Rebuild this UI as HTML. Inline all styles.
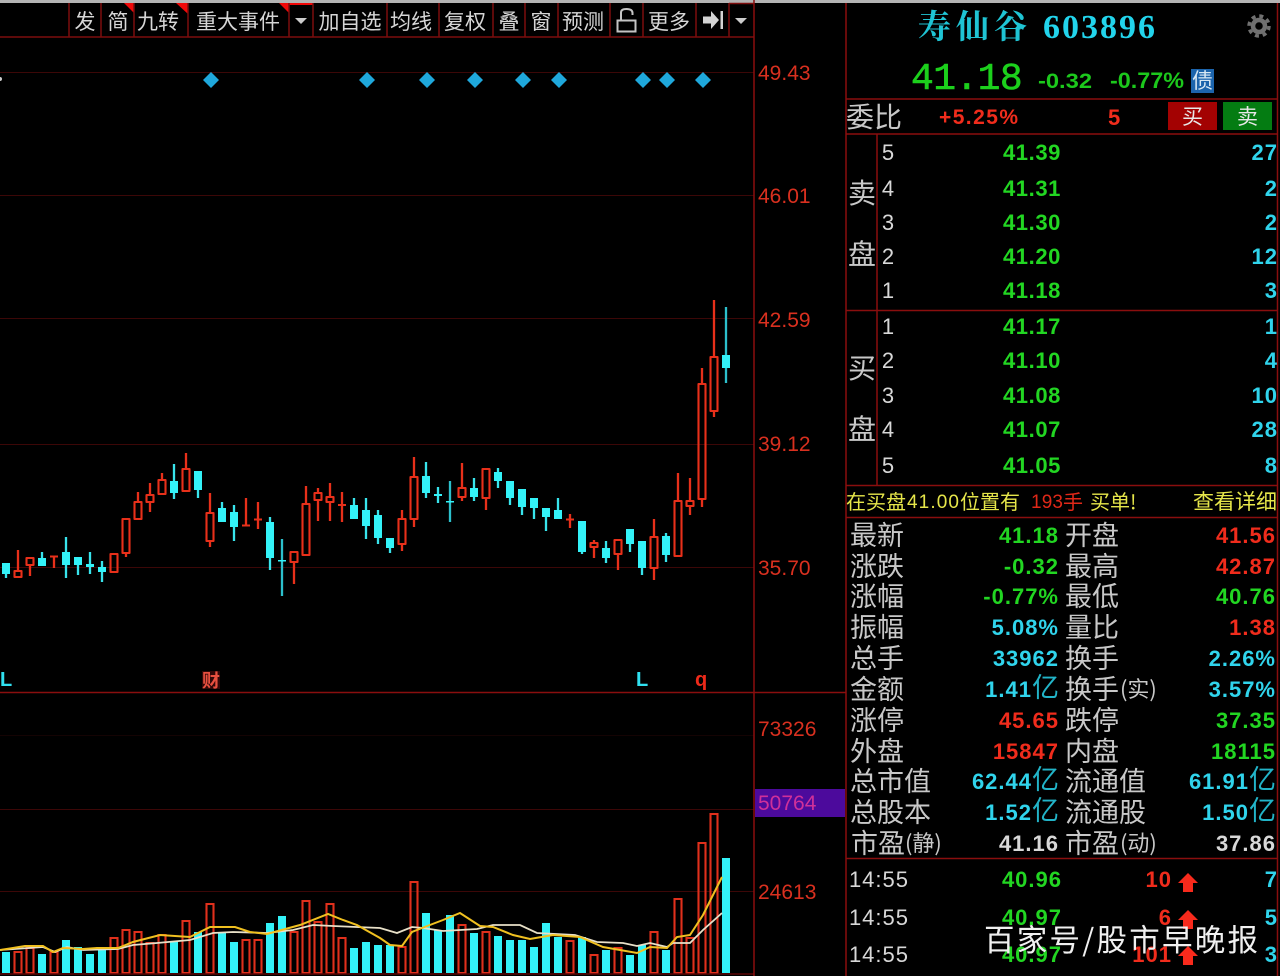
<!DOCTYPE html>
<html lang="zh"><head><meta charset="utf-8"><title>寿仙谷 603896</title>
<style>
html,body{margin:0;padding:0;background:#000;width:1280px;height:976px;overflow:hidden}
svg{display:block;position:absolute;left:0;top:0;filter:blur(.35px)}
text{font-family:"Liberation Sans","WenQuanYi Zen Hei",sans-serif}
.tb{font-family:"WenQuanYi Zen Hei","Noto Sans CJK SC",sans-serif;font-size:21px;fill:#d6d6d6;text-anchor:middle}
.ax{font-size:21px;fill:#d9301f;stroke:none}
.lb{font-family:"WenQuanYi Zen Hei","Noto Sans CJK SC",sans-serif;font-size:27px;fill:#c8c8c8}
.n{font-weight:bold;font-size:22px;letter-spacing:1px;text-anchor:end}
.g{fill:#22d622}.r{fill:#f02c1c}.c{fill:#30d4ec}.w{fill:#d8d8d8}
.yi{font-family:"WenQuanYi Zen Hei","Noto Sans CJK SC",sans-serif;font-weight:normal;font-size:27px;letter-spacing:0;fill:#22b4c8}
.p{font-weight:bold;font-size:22px;letter-spacing:.6px;text-anchor:middle;fill:#22d622}
.i{font-size:22px;fill:#d8d8d8;text-anchor:middle}
.y{font-family:"WenQuanYi Zen Hei","Noto Sans CJK SC",sans-serif;font-size:20px;fill:#e6e64a}
</style></head><body>
<svg width="1280" height="976" viewBox="0 0 1280 976">
<rect width="1280" height="976" fill="#000"/>
<rect width="1280" height="3" fill="#b4b4b4"/>

<!-- grid -->
<path d="M0 72.500H754M0 195.500H754M0 318.500H754M0 444.500H754M0 567.500H754M0 809.500H754M0 891.500H754" stroke="#3c0707" stroke-width="1" fill="none"/>
<path d="M0 735.500H754" stroke="#140303" stroke-width="1" fill="none"/>

<!-- diamonds -->
<g fill="#1fa8dc">
<path d="M211 72l8 8-8 8-8-8z"/>
<path d="M367 72l8 8-8 8-8-8z"/>
<path d="M427 72l8 8-8 8-8-8z"/>
<path d="M475 72l8 8-8 8-8-8z"/>
<path d="M523 72l8 8-8 8-8-8z"/>
<path d="M559 72l8 8-8 8-8-8z"/>
<path d="M643 72l8 8-8 8-8-8z"/>
<path d="M667 72l8 8-8 8-8-8z"/>
<path d="M703 72l8 8-8 8-8-8z"/>
</g>
<circle cx="0" cy="79" r="2" fill="#ccc"/>

<!-- candles -->
<path fill="none" stroke="#e8301a" stroke-width="2.300" d="M18 550V571M30 565V576M54 557V568M126 553V557M138 492V502M150 483V495M150 502V512M162 473V480M186 453V469M210 493V513M210 541V547M246 498V525M258 502V529M294 562V584M306 486V504M318 488V493M318 500V521M330 483V497M330 502V521M342 492V522M402 510V519M402 544V551M414 457V477M414 519V527M462 463V488M462 497V501M486 498V510M570 514V528M594 540V543M594 547V558M618 554V570M654 519V537M654 568V580M678 473V501M690 478V501M690 506V515M702 368V384M702 499V507M714 300V357M714 411V417"/>
<path fill="none" stroke="#e8301a" stroke-width="2.100" stroke-linejoin="round" d="M14.500 571H21.500V577H14.500ZM26.500 558H33.500V565H26.500ZM50 556.500H58M110.500 554H117.500V572H110.500ZM122.500 519H129.500V553H122.500ZM134.500 502H141.500V519H134.500ZM146.500 495H153.500V502H146.500ZM158.500 480H165.500V494H158.500ZM182.500 469H189.500V491H182.500ZM206.500 513H213.500V541H206.500ZM242 525.500H250M254 519.500H262M290.500 552H297.500V562H290.500ZM302.500 504H309.500V555H302.500ZM314.500 493H321.500V500H314.500ZM326.500 497H333.500V502H326.500ZM338 505H346M398.500 519H405.500V544H398.500ZM410.500 477H417.500V519H410.500ZM458.500 488H465.500V497H458.500ZM482.500 469H489.500V498H482.500ZM566 519.500H574M590.500 543H597.500V547H590.500ZM614.500 540H621.500V554H614.500ZM650.500 537H657.500V568H650.500ZM674.500 501H681.500V556H674.500ZM686.500 501H693.500V506H686.500ZM698.500 384H705.500V499H698.500ZM710.500 357H717.500V411H710.500Z"/>
<path fill="none" stroke="#38e4ec" stroke-width="2.300" d="M6 574V578M42 552V558M66 537V578M78 565V575M90 552V574M102 561V582M174 464V499M198 490V498M222 502V508M234 505V541M270 517V570M354 498V505M366 498V539M378 510V544M390 548V553M426 462V498M438 487V503M474 478V501M498 468V488M510 498V505M522 507V515M534 508V519M546 517V531M558 498V510M582 552V554M606 541V563M630 544V552M642 568V575M666 533V562"/>
<path fill="none" stroke="#2cc0cc" stroke-width="2.300" d="M282 539V596M450 481V522M726 307V383"/>
<path fill="#33f2f8" d="M2 563H10V574H2ZM38 558H46V566H38ZM62 552H70V565H62ZM74 557H82V565H74ZM86 564H94V567H86ZM98 567H106V572H98ZM170 481H178V493H170ZM194 471H202V490H194ZM218 508H226V522H218ZM230 512H238V527H230ZM266 522H274V558H266ZM278 560H286V561.500H278ZM350 505H358V519H350ZM362 510H370V526H362ZM374 515H382V538H374ZM386 538H394V548H386ZM422 476H430V493H422ZM434 494H442V496H434ZM446 501H454V502.500H446ZM470 488H478V497H470ZM494 472H502V481H494ZM506 481H514V498H506ZM518 489H526V507H518ZM530 498H538V508H530ZM542 508H550V517H542ZM554 510H562V519H554ZM578 521H586V552H578ZM602 548H610V558H602ZM626 529H634V544H626ZM638 541H646V568H638ZM662 536H670V555H662ZM722 355H730V368H722Z"/>

<!-- markers -->
<text x="0" y="686" font-size="20" font-weight="bold" fill="#30e0f0">L</text>
<rect x="202" y="671" width="18" height="18" fill="#300808"/>
<text x="211" y="687" font-size="18" text-anchor="middle" font-weight="bold" fill="#e85040" style="font-family:'Noto Sans CJK SC',sans-serif">财</text>
<text x="636" y="686" font-size="20" font-weight="bold" fill="#30e0f0">L</text>
<text x="695" y="686" font-size="20" font-weight="bold" fill="#ee2a1a">q</text>

<!-- volume bars -->
<path fill="#33f2f8" d="M2 952H10V973H2ZM38 954H46V973H38ZM62 940H70V973H62ZM74 947H82V973H74ZM86 954H94V973H86ZM98 949H106V973H98ZM170 942H178V973H170ZM194 932H202V973H194ZM218 932H226V973H218ZM230 942H238V973H230ZM266 923H274V973H266ZM278 916H286V973H278ZM350 948H358V973H350ZM362 942H370V973H362ZM374 945H382V973H374ZM386 945H394V973H386ZM422 913H430V973H422ZM434 930H442V973H434ZM446 915H454V973H446ZM470 933H478V973H470ZM494 936H502V973H494ZM506 940H514V973H506ZM518 940H526V973H518ZM530 947H538V973H530ZM542 923H550V973H542ZM554 937H562V973H554ZM578 937H586V973H578ZM602 950H610V973H602ZM626 955H634V973H626ZM638 945H646V973H638ZM662 950H670V973H662ZM722 858H730V973H722Z"/>
<path fill="none" stroke="#e0301c" stroke-width="2.100" d="M14.500 952H21.500V973H14.500ZM26.500 948H33.500V973H26.500ZM50.500 952H57.500V973H50.500ZM110.500 938H117.500V973H110.500ZM122.500 930H129.500V973H122.500ZM134.500 932H141.500V973H134.500ZM146.500 943H153.500V973H146.500ZM158.500 935H165.500V973H158.500ZM182.500 921H189.500V973H182.500ZM206.500 904H213.500V973H206.500ZM242.500 940H249.500V973H242.500ZM254.500 940H261.500V973H254.500ZM290.500 932H297.500V973H290.500ZM302.500 901H309.500V973H302.500ZM314.500 922H321.500V973H314.500ZM326.500 904H333.500V973H326.500ZM338.500 938H345.500V973H338.500ZM398.500 947H405.500V973H398.500ZM410.500 882H417.500V973H410.500ZM458.500 925H465.500V973H458.500ZM482.500 932H489.500V973H482.500ZM566.500 941H573.500V973H566.500ZM590.500 955H597.500V973H590.500ZM614.500 948H621.500V973H614.500ZM650.500 932H657.500V973H650.500ZM674.500 899H681.500V973H674.500ZM686.500 938H693.500V973H686.500ZM698.500 843H705.500V973H698.500ZM710.500 814H717.500V973H710.500Z"/>
<path fill="none" stroke="#e8e0c8" stroke-width="1.800" d="M0 950L43 947L55 952L67 947L83 950L118 949L133 945L157 943L190 940L213 933L233 932L267 933L293 930L313 925L333 926L380 928L397 933L412 927L423 928L443 931L477 929L493 925L520 925L537 933L575 935L597 942L623 943L637 946L650 943L667 947L673 943L690 943L703 930L722 913"/>
<path fill="none" stroke="#f0c020" stroke-width="2" d="M0 950L13 948L25 946L43 946L53 952L63 948L83 949L97 948L118 948L133 942L160 935L190 937L210 927L235 927L250 932L267 934L300 925L328 914L343 920L357 925L380 938L390 945L402 946L412 932L422 928L443 920L460 913L480 926L493 927L513 935L530 939L553 935L580 937L603 947L637 953L650 947L667 948L677 937L690 935L703 915L722 877"/>
<path d="M0 974H754" stroke="#5a0606" stroke-width="1.500"/>

<!-- axis labels -->
<rect x="755" y="789" width="90" height="28" fill="#4c0a9c"/>
<text class="ax" x="758" y="80">49.43</text>
<text class="ax" x="758" y="203">46.01</text>
<text class="ax" x="758" y="327">42.59</text>
<text class="ax" x="758" y="451">39.12</text>
<text class="ax" x="758" y="575">35.70</text>
<text class="ax" x="758" y="736">73326</text>
<text class="ax" x="758" y="810" style="fill:#d0309a">50764</text>
<text class="ax" x="758" y="899">24613</text>

<!-- toolbar -->
<path fill="#f00808" d="M124 3H134V13ZM176 3H188V14ZM279 3H289V13ZM289 3H313V5H289Z"/>
<path d="M0 37H754M69 3V37M101 3V37M134 3V37M188 3V37M289 3V37M313 3V37M387 3V37M439 3V37M493 3V37M525 3V37M558 3V37M610 3V37M643 3V37M696 3V37M729 3V37" stroke="#7c0d0d" stroke-width="1.500" fill="none"/>
<path d="M729 3.500H754" stroke="#7c0d0d" stroke-width="1.500"/>
<text class="tb" x="85" y="29">发</text>
<text class="tb" x="118" y="29">简</text>
<text class="tb" x="158" y="29">九转</text>
<text class="tb" x="238" y="29">重大事件</text>
<path d="M295 18H307L301 24Z" fill="#ccc"/>
<text class="tb" x="350" y="29">加自选</text>
<text class="tb" x="411" y="29">均线</text>
<text class="tb" x="465" y="29">复权</text>
<text class="tb" x="509" y="29">叠</text>
<text class="tb" x="541" y="29">窗</text>
<text class="tb" x="583" y="29">预测</text>
<path d="M617.500 20.500H635.500V31.500H617.500ZM621 20V12.500Q621 9 626.500 9Q632.500 9 632.500 13V15" fill="none" stroke="#c4c4c4" stroke-width="2"/>
<text class="tb" x="669" y="29">更多</text>
<path d="M703 16.500H711V11L719 20L711 29V23.500H703Z" fill="#d4d4d4"/>
<rect x="720.500" y="11" width="2.500" height="18" fill="#d4d4d4"/>
<path d="M735 18H747L741 24Z" fill="#ccc"/>

<!-- frames -->
<path d="M754 0V976M846 3V976M1277.500 3V976M0 692.500H846M846 99H1278M846 134H1278M877 134V485M846 310.500H1278M846 485.500H1278M846 517.500H1278M846 858.500H1278" stroke="#8a0e0e" stroke-width="1.500" fill="none"/>

<!-- header -->
<text x="918" y="38" style="font-family:'Noto Serif CJK SC',serif" font-size="33" font-weight="bold" letter-spacing="5" fill="#1fc4d4">寿仙谷</text>
<text x="1043" y="38" style="font-family:'Liberation Serif',serif" font-size="34" font-weight="bold" letter-spacing="2" fill="#22d4ec">603896</text>
<g fill="none" stroke="#707070">
<circle cx="1259" cy="26" r="6" stroke-width="4.500"/>
<circle cx="1259" cy="26" r="10" stroke-width="3.500" stroke-dasharray="4 3.850"/>
</g>
<text x="911" y="89" style="font-family:'Liberation Mono',monospace" font-size="38" letter-spacing="-.6" fill="#1cd01c" stroke="#1cd01c" stroke-width=".6">41.18</text>
<text x="1038" y="88" font-size="21" font-weight="bold" fill="#1cc81c" textLength="54" lengthAdjust="spacingAndGlyphs">-0.32</text>
<text x="1110" y="88" font-size="22" font-weight="bold" fill="#1cc81c" textLength="74" lengthAdjust="spacingAndGlyphs">-0.77%</text>
<rect x="1191" y="69" width="23" height="24" fill="#1c64ac"/>
<text x="1202.500" y="88" font-size="21" text-anchor="middle" fill="#d8e8f4" style="font-family:'Noto Sans CJK SC',sans-serif">债</text>

<text x="846" y="127" class="lb" style="font-size:28px">委比</text>
<text x="939" y="124" font-size="21" font-weight="bold" fill="#f02c1c" textLength="79">+5.25%</text>
<text x="1108" y="125" font-size="22" font-weight="bold" fill="#f02c1c">5</text>
<rect x="1168" y="102" width="49" height="28" fill="#a30202"/>
<rect x="1223" y="102" width="49" height="28" fill="#047c12"/>
<text x="1192.500" y="124" font-size="21" text-anchor="middle" fill="#e8e8e8" style="font-family:'WenQuanYi Zen Hei','Noto Sans CJK SC',sans-serif">买</text>
<text x="1247.500" y="124" font-size="21" text-anchor="middle" fill="#e8e8e8" style="font-family:'WenQuanYi Zen Hei','Noto Sans CJK SC',sans-serif">卖</text>

<!-- book -->
<g class="lb" style="font-size:28px">
<text x="848" y="203">卖</text><text x="848" y="264">盘</text>
<text x="848" y="378">买</text><text x="848" y="439">盘</text>
</g>
<text class="i" x="888" y="160">5</text><text class="p" x="1032" y="160">41.39</text><text class="n c" x="1278" y="160">27</text>
<text class="i" x="888" y="196">4</text><text class="p" x="1032" y="196">41.31</text><text class="n c" x="1278" y="196">2</text>
<text class="i" x="888" y="230">3</text><text class="p" x="1032" y="230">41.30</text><text class="n c" x="1278" y="230">2</text>
<text class="i" x="888" y="264">2</text><text class="p" x="1032" y="264">41.20</text><text class="n c" x="1278" y="264">12</text>
<text class="i" x="888" y="298">1</text><text class="p" x="1032" y="298">41.18</text><text class="n c" x="1278" y="298">3</text>
<text class="i" x="888" y="334">1</text><text class="p" x="1032" y="334">41.17</text><text class="n c" x="1278" y="334">1</text>
<text class="i" x="888" y="368">2</text><text class="p" x="1032" y="368">41.10</text><text class="n c" x="1278" y="368">4</text>
<text class="i" x="888" y="403">3</text><text class="p" x="1032" y="403">41.08</text><text class="n c" x="1278" y="403">10</text>
<text class="i" x="888" y="437">4</text><text class="p" x="1032" y="437">41.07</text><text class="n c" x="1278" y="437">28</text>
<text class="i" x="888" y="473">5</text><text class="p" x="1032" y="473">41.05</text><text class="n c" x="1278" y="473">8</text>

<!-- yellow bar -->
<text class="y" x="846" y="509">在买盘</text>
<text x="907" y="508" font-size="19" fill="#e6e64a" textLength="52">41.00</text>
<text class="y" x="960" y="509">位置有</text>
<text x="1031" y="508" font-size="19" fill="#e02818" textLength="32">193</text>
<text class="y" x="1063" y="509" style="fill:#e02818">手</text>
<text class="y" x="1090" y="509">买单!</text>
<text class="y" x="1193" y="509" style="font-size:21px">查看详细</text>

<!-- quote labels -->
<g class="lb">
<text x="850" y="545">最新</text><text x="850" y="576">涨跌</text><text x="850" y="606">涨幅</text><text x="850" y="637">振幅</text><text x="850" y="668">总手</text><text x="850" y="699">金额</text><text x="850" y="730">涨停</text><text x="850" y="761">外盘</text><text x="850" y="791">总市值</text><text x="850" y="822">总股本</text><text x="851" y="853">市盈</text>
<text x="1065" y="545">开盘</text><text x="1065" y="576">最高</text><text x="1065" y="606">最低</text><text x="1065" y="637">量比</text><text x="1065" y="668">换手</text><text x="1065" y="699">换手</text><text x="1065" y="730">跌停</text><text x="1065" y="761">内盘</text><text x="1065" y="791">流通值</text><text x="1065" y="822">流通股</text><text x="1065" y="853">市盈</text>
</g>
<text x="905" y="851" class="lb" style="font-size:22px">(静)</text>
<text x="1120" y="851" class="lb" style="font-size:22px">(动)</text>
<text x="1120" y="697" class="lb" style="font-size:22px">(实)</text>

<text class="n g" x="1059" y="543">41.18</text><text class="n r" x="1276" y="543">41.56</text>
<text class="n g" x="1059" y="574">-0.32</text><text class="n r" x="1276" y="574">42.87</text>
<text class="n g" x="1059" y="604">-0.77%</text><text class="n g" x="1276" y="604">40.76</text>
<text class="n c" x="1059" y="635">5.08%</text><text class="n r" x="1276" y="635">1.38</text>
<text class="n c" x="1059" y="666">33962</text><text class="n c" x="1276" y="666">2.26%</text>
<text class="n c" x="1059" y="697">1.41<tspan class="yi">亿</tspan></text><text class="n c" x="1276" y="697">3.57%</text>
<text class="n r" x="1059" y="728">45.65</text><text class="n g" x="1276" y="728">37.35</text>
<text class="n r" x="1059" y="759">15847</text><text class="n g" x="1276" y="759">18115</text>
<text class="n c" x="1059" y="789">62.44<tspan class="yi">亿</tspan></text><text class="n c" x="1276" y="789">61.91<tspan class="yi">亿</tspan></text>
<text class="n c" x="1059" y="820">1.52<tspan class="yi">亿</tspan></text><text class="n c" x="1276" y="820">1.50<tspan class="yi">亿</tspan></text>
<text class="n w" x="1059" y="851">41.16</text><text class="n w" x="1276" y="851">37.86</text>

<!-- ticks -->
<text class="n w" x="909" y="887" style="font-weight:normal">14:55</text><text class="n g" x="1062" y="887">40.96</text><text class="n r" x="1172" y="887">10</text>
<text class="n w" x="909" y="925" style="font-weight:normal">14:55</text><text class="n g" x="1062" y="925">40.97</text><text class="n r" x="1172" y="925">6</text>
<text class="n w" x="909" y="962" style="font-weight:normal">14:55</text><text class="n g" x="1062" y="962">40.97</text><text class="n r" x="1172" y="962">101</text>
<path fill="#f82a1c" d="M1188 873L1198 883H1193V892H1183V883H1178Z"/>
<path fill="#f82a1c" d="M1188 910L1198 920H1193V929H1183V920H1178Z"/>
<path fill="#f82a1c" d="M1188 946L1198 956H1193V965H1183V956H1178Z"/>
<text class="n c" x="1278" y="887">7</text><text class="n c" x="1278" y="925">5</text><text class="n c" x="1278" y="962">3</text>

<!-- watermark -->
<text x="984" y="951" font-size="30.500" fill="#f0f0f0" style="font-family:'Noto Sans CJK SC',sans-serif" textLength="274">百家号/股市早晚报</text>
</svg>
</body></html>
